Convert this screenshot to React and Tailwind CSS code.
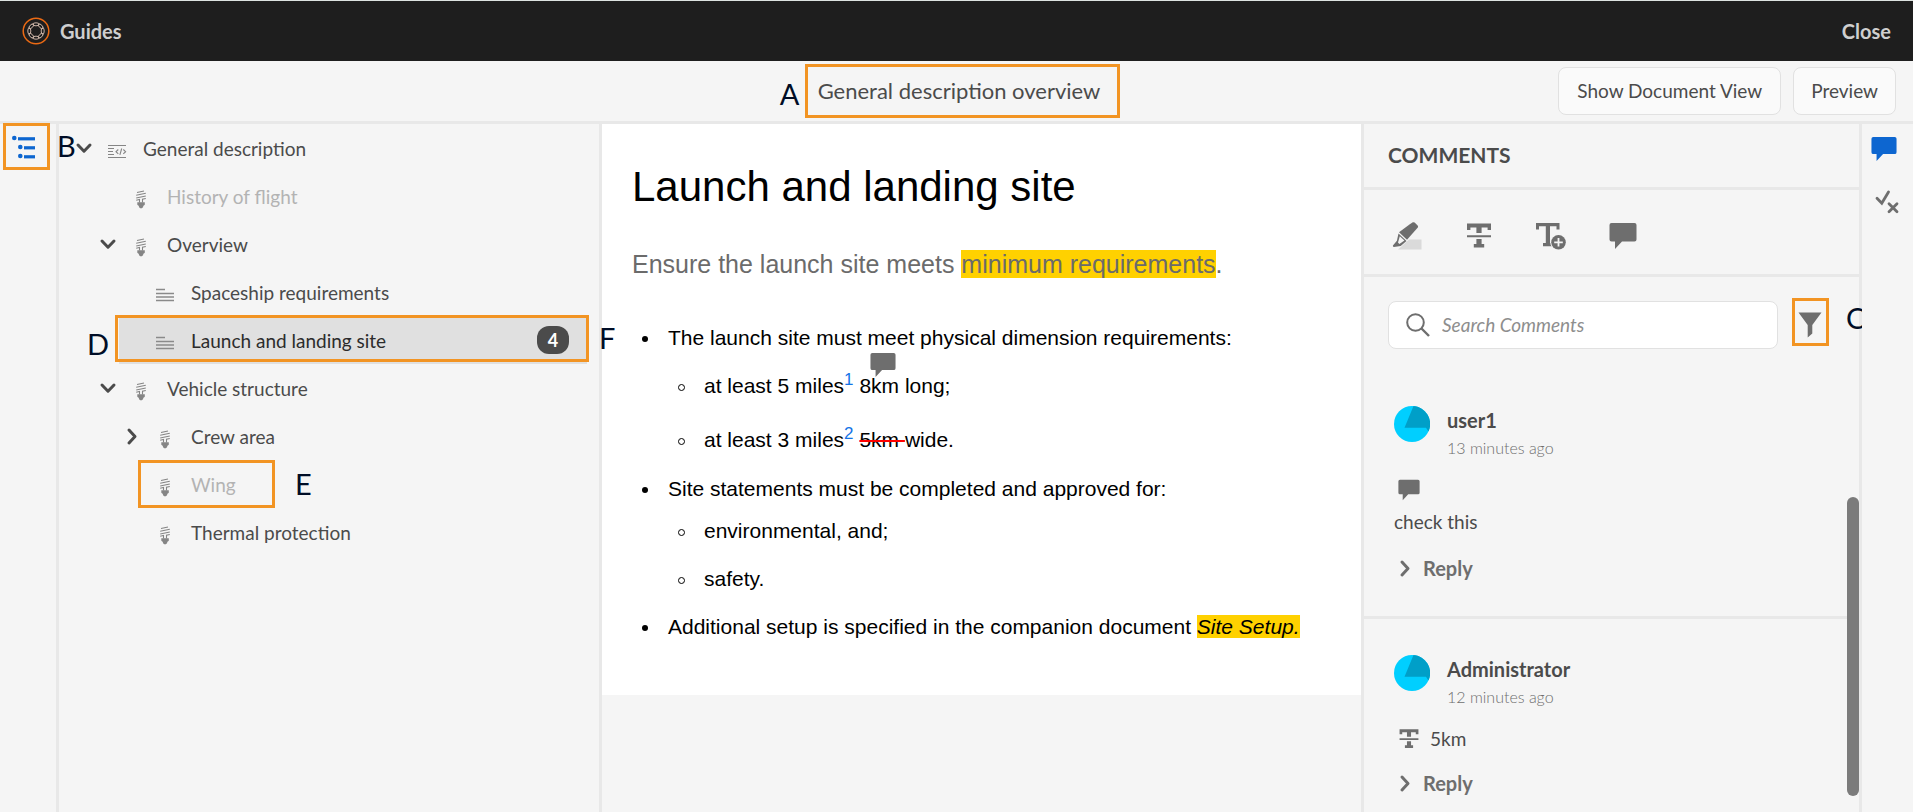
import React from "react";

function Letter({ className, children }) {
  return (
    <span
      aria-hidden="true"
      className={`pointer-events-none absolute z-10 text-[29px] leading-8 text-[#000d26] ${className}`}
    >
      {children}
    </span>
  );
}

function Outline({ className }) {
  return <span aria-hidden="true" className={`pointer-events-none absolute border-3 border-[#f29423] ${className}`} />;
}

function Logo() {
  return (
    <svg viewBox="0 0 28 28" className="size-7" fill="none">
      <circle cx="14" cy="14" r="12.8" stroke="#eb6a14" strokeWidth="1.5" />
      <g stroke="#dcc3b4" strokeWidth="0.9">
        <ellipse cx="14" cy="7.300" rx="3.200" ry="1.500" />
        <ellipse cx="14" cy="20.700" rx="3.200" ry="1.500" />
        <ellipse cx="7.300" cy="14" rx="1.500" ry="3.200" />
        <ellipse cx="20.700" cy="14" rx="1.500" ry="3.200" />
        <ellipse cx="9.300" cy="9.300" rx="3" ry="1.500" transform="rotate(-45 9.300 9.300)" />
        <ellipse cx="18.700" cy="18.700" rx="3" ry="1.500" transform="rotate(-45 18.700 18.700)" />
        <ellipse cx="18.700" cy="9.300" rx="3" ry="1.500" transform="rotate(45 18.700 9.300)" />
        <ellipse cx="9.300" cy="18.700" rx="3" ry="1.500" transform="rotate(45 9.300 18.700)" />
      </g>
    </svg>
  );
}

function OutlineIcon() {
  return (
    <svg viewBox="0 0 24 24" className="size-6" fill="#0d66d0">
      <circle cx="2.3" cy="3" r="2.3" />
      <rect x="6" y="2.2" width="17" height="3.2" />
      <circle cx="8.3" cy="12" r="2.3" />
      <rect x="12" y="11.2" width="11" height="3.2" />
      <circle cx="8.3" cy="21" r="2.3" />
      <rect x="12" y="20.2" width="11" height="3.2" />
    </svg>
  );
}

function Chevron({ right, className }) {
  return (
    <svg viewBox="0 0 22 22" className={className} fill="none" stroke="currentColor" strokeWidth="3" strokeLinecap="round" strokeLinejoin="round">
      <path d={right ? "M8 5l6 6.5-6 6.5" : "M5 8l6 6.2L17 8"} />
    </svg>
  );
}

function MapIcon() {
  return (
    <svg viewBox="0 0 20 20" className="size-5" fill="none" stroke="#858585" strokeWidth="1.2">
      <path d="M1 3.500h18M1 6.500h6M1 9.500h5M1 12.500h6M1 15.500h18" />
      <path d="M11.300 7.500l-2.300 2.200 2.300 2.200M16.300 7.500l2.300 2.200-2.300 2.200M14.700 6.500l-1.800 6.400" strokeWidth="1.100" />
    </svg>
  );
}

function BulbIcon() {
  return (
    <svg viewBox="0 0 20 20" className="size-5" fill="none" stroke="#858585" strokeWidth="1.1">
      <path d="M6 2.500l7-1.500M5.200 5.300l9.600-2M5.200 8l9.600-2M5.200 10.200l3.300-.7v3M14.800 8.500l-3.300.8v3.200" />
      <path d="M6.300 12.200h7.500v2.500l-1.600 1.200v1.200l-1.300 1.200H9.200l-1.300-1.200v-1.200l-1.600-1.200z" fill="#858585" stroke="none" />
    </svg>
  );
}

function TopicIcon() {
  return (
    <svg viewBox="0 0 20 20" className="size-5" fill="none" stroke="#8a8a8a" strokeWidth="1.3">
      <path d="M1 3.500h9M1 7.500h18M1 11h18M1 14.500h18" />
    </svg>
  );
}

function BubbleIcon({ className }) {
  return (
    <svg viewBox="0 0 28 28" className={className} fill="currentColor">
      <path d="M2.500 1h23a2 2 0 0 1 2 2v14.500a2 2 0 0 1-2 2H13L6 27v-7.500H2.500a2 2 0 0 1-2-2V3a2 2 0 0 1 2-2z" />
    </svg>
  );
}

function HighlightIcon() {
  return (
    <svg viewBox="0 0 30 28" className="h-7 w-[30px]">
      <path d="M6 27.500h23.500v-10H17z" fill="#dadada" />
      <path d="M17.800 2.300l3-2q1-.4 1.800.3l3 3q.8.900.2 1.900L15 17.800l-8-7.600z" fill="#6e6e6e" />
      <path d="M6.500 11.600l-1.600 7.200-4 4.800q-.3 1.300 1 1.400l6.800-1 5.800-5z" fill="#6e6e6e" />
      <path d="M7.800 14.300l4.600 4.300-5 3.300-1.400-1.300z" fill="#f4f4f4" />
    </svg>
  );
}

function StrikeIcon({ className }) {
  return (
    <svg viewBox="0 0 28 28" className={className} fill="currentColor">
      <path d="M2 1.500h24V8h-3.400V5.500h-6V11h-5.200V5.500h-6V8H2zM2 13.200h24v2H2zM11.400 17h5.200v5h2.600v3.500H8.800V22h2.600z" />
    </svg>
  );
}

function InsertIcon() {
  return (
    <svg viewBox="0 0 30 28" className="h-7 w-[30px]">
      <path d="M0 1h23.500v6.500h-3V4.300H14V21h2v3.300H7V21h2.800V4.300H3v3.200H0z" fill="#6e6e6e" />
      <circle cx="22.500" cy="20.300" r="8.300" fill="#f4f4f4" />
      <circle cx="22.500" cy="20.300" r="7.300" fill="#6e6e6e" />
      <path d="M22.500 16v8.600M18.200 20.300h8.600" stroke="#f4f4f4" strokeWidth="1.800" />
    </svg>
  );
}

function CheckCrossIcon() {
  return (
    <svg viewBox="0 0 24 24" className="size-6" fill="none" stroke="#6e6e6e" strokeWidth="2.800" strokeLinecap="round">
      <path d="M2 8.300l4.800 5L13.500 2M14 13.800l8 8M22 13.800l-8 8" />
    </svg>
  );
}

function Avatar() {
  return (
    <svg viewBox="0 0 36 36" className="size-9 shrink-0">
      <circle cx="18" cy="18" r="18" fill="#00cfff" />
      <path d="M19.500 0A18 18 0 0 1 34.500 25.500L32 21.800H10.500z" fill="#009fc8" />
    </svg>
  );
}

const tree = [
  {
    label: "General description",
    icon: MapIcon,
    open: true,
    children: [
      { label: "History of flight", icon: BulbIcon, muted: true },
      {
        label: "Overview",
        icon: BulbIcon,
        open: true,
        children: [
          { label: "Spaceship requirements", icon: TopicIcon },
          { label: "Launch and landing site", icon: TopicIcon, selected: true, count: 4 },
        ],
      },
      {
        label: "Vehicle structure",
        icon: BulbIcon,
        open: true,
        children: [
          { label: "Crew area", icon: BulbIcon, collapsed: true },
          { label: "Wing", icon: BulbIcon, muted: true, marked: true },
          { label: "Thermal protection", icon: BulbIcon },
        ],
      },
    ],
  },
];

function TreeItem({ node }) {
  const Icon = node.icon;
  const color = node.selected ? "text-[#2c2c2c]" : node.muted ? "text-[#b3b3b3]" : "text-[#4b4b4b]";
  return (
    <li>
      <div className={`relative flex h-12 items-center pl-0.5 ${node.selected ? "bg-[#e0e0e0]" : ""}`}>
        <span className="mr-3 flex w-[22px] shrink-0 text-[#4b4b4b]">
          {(node.open || node.collapsed) && (
            <button type="button" aria-label={`Toggle ${node.label}`}>
              <Chevron right={node.collapsed} className="size-[22px]" />
            </button>
          )}
        </span>
        <span className="mr-4 shrink-0 pt-2">
          <Icon />
        </span>
        <a href="#topic" className={`flex-1 pt-0.5 ${color}`}>
          {node.label}
        </a>
        {node.count && (
          <span className="mr-[18px] flex h-7 w-8 items-center justify-center rounded-xl bg-[#4b4b4b] text-[18px] font-bold text-white">
            {node.count}
          </span>
        )}
        {node.selected && (
          <>
            <Outline className="-top-px -right-0.5 bottom-0.5 -left-1" />
            <Letter className="top-3 -left-8">D</Letter>
          </>
        )}
        {node.marked && (
          <>
            <Outline className="top-0 bottom-0 left-[19px] w-[137px]" />
            <Letter className="top-2 left-44">E</Letter>
          </>
        )}
      </div>
      {node.children && (
        <ul className="pl-6">
          {node.children.map((c) => (
            <TreeItem key={c.label} node={c} />
          ))}
        </ul>
      )}
    </li>
  );
}

function Comment({ name, time, children }) {
  return (
    <article className="border-b-3 border-[#e8e8e8] pt-9 pb-6 pl-[30px]">
      <div className="flex gap-[17px]">
        <Avatar />
        <div>
          <h3 className="text-[20px] leading-7 font-bold text-[#4b4b4b]">{name}</h3>
          <p className="text-[16px] leading-7 font-light text-[#6e6e6e]">{time}</p>
        </div>
      </div>
      <div className="mt-4 text-[#4b4b4b]">{children}</div>
      <button type="button" className="mt-2 flex h-12 items-center gap-[7px] text-[20px] font-bold text-[#6e6e6e]">
        <Chevron right className="size-[22px]" />
        Reply
      </button>
    </article>
  );
}

function DiscItem({ className = "", children }) {
  return (
    <li className={`relative before:absolute before:top-[10px] before:-left-[26px] before:size-1.5 before:rounded-full before:bg-black ${className}`}>
      {children}
    </li>
  );
}

function RingItem({ className = "", children }) {
  return (
    <li className={`relative before:absolute before:top-[10px] before:-left-[26px] before:size-[7px] before:rounded-full before:border before:border-black ${className}`}>
      {children}
    </li>
  );
}

function Doc() {
  return (
    <main className="min-w-0 flex-1 overflow-hidden">
      <article className="bg-white px-[30px] pt-[39px] pb-14 font-['Liberation_Sans',Arial,sans-serif] text-[21px] leading-6 text-black">
        <h1 className="text-[42px] leading-[48px]">Launch and landing site</h1>
        <p className="mt-[37px] text-[25px] leading-8 text-[#6b6b6b]">
          Ensure the launch site meets <mark className="bg-[#ffd100] text-inherit">minimum requirements</mark>.
        </p>
        <ul className="mt-[46px] pl-9">
          <DiscItem>
            The launch site must meet physical dimension requirements:
            <ul className="mt-6 pl-9">
              <RingItem>
                at least 5 miles
                <a href="#note-1" className="relative -top-2 text-[17px] leading-none text-[#1473e6]">1</a>{" "}
                <span className="relative">
                  8km
                  <BubbleIcon className="absolute -top-[22px] left-[11px] size-[26px] text-[#6e6e6e]" />
                </span>{" "}
                long;
              </RingItem>
              <RingItem className="mt-[30px]">
                at least 3 miles
                <a href="#note-2" className="relative -top-2 text-[17px] leading-none text-[#1473e6]">2</a>{" "}
                <del className="decoration-[#ff0000] decoration-2">5km </del>wide.
              </RingItem>
            </ul>
          </DiscItem>
          <DiscItem className="mt-[25px]">
            Site statements must be completed and approved for:
            <ul className="mt-[18px] pl-9">
              <RingItem>environmental, and;</RingItem>
              <RingItem className="mt-6">safety.</RingItem>
            </ul>
          </DiscItem>
          <DiscItem className="mt-6">
            Additional setup is specified in the companion document{" "}
            <mark className="bg-[#ffd100] text-inherit italic">Site Setup.</mark>
          </DiscItem>
        </ul>
      </article>
    </main>
  );
}

function CommentsPanel() {
  return (
    <aside className="relative flex w-[501px] shrink-0 flex-col border-x-3 border-[#e8e8e8]">
      <h2 className="shrink-0 border-b-3 border-[#e8e8e8] pt-[15px] pb-4 pl-6 text-[21px] leading-8 font-bold text-[#4b4b4b]">
        COMMENTS
      </h2>
      <div className="flex shrink-0 gap-[43px] border-b-3 border-[#e8e8e8] pt-8 pb-6 pl-7 text-[#6e6e6e]">
        <button type="button" aria-label="Highlight"><HighlightIcon /></button>
        <button type="button" aria-label="Strikethrough"><StrikeIcon className="size-7" /></button>
        <button type="button" aria-label="Insert text"><InsertIcon /></button>
        <button type="button" aria-label="Add comment"><BubbleIcon className="size-7" /></button>
      </div>
      <div className="flex shrink-0 items-start gap-3.5 pt-6 pr-[30px] pl-6">
        <label className="flex h-12 flex-1 items-center gap-3 rounded-lg border border-[#e1e1e1] bg-white px-[17px]">
          <svg viewBox="0 0 24 24" className="size-6" fill="none" stroke="#6e6e6e" strokeWidth="2">
            <circle cx="9.500" cy="9.500" r="8.300" />
            <path d="M15.500 15.500l7.500 7.500" strokeWidth="2.400" />
          </svg>
          <input
            type="text"
            aria-label="Search Comments"
            placeholder="Search Comments"
            className="min-w-0 flex-1 outline-none placeholder:text-[#8e8e8e] placeholder:italic"
          />
        </label>
        <div className="relative -mt-[3px]">
          <button type="button" aria-label="Filter" className="flex h-12 w-[37px] items-center justify-center border-3 border-[#f29423] pr-0.5">
            <svg viewBox="0 0 24 26" className="mt-1.5 h-[26px] w-6" fill="#6e6e6e">
              <path d="M.500.500h23L14.300 13v8.500L9.700 25.500V13z" />
            </svg>
          </button>
          <Letter className="top-1 left-[54px]">C</Letter>
        </div>
      </div>
      <div className="mt-[21px] min-h-0 flex-1 overflow-hidden pr-3">
        <Comment name="user1" time="13 minutes ago">
          <span className="flex h-6 items-center pl-1">
            <BubbleIcon className="size-[22px] text-[#6e6e6e]" />
          </span>
          <p className="mt-1.5 leading-7">check this</p>
        </Comment>
        <Comment name="Administrator" time="12 minutes ago">
          <p className="flex h-6 items-center gap-2.5 pl-1">
            <StrikeIcon className="size-[22px] text-[#6e6e6e]" />
            5km
          </p>
        </Comment>
      </div>
      <span className="absolute right-0 bottom-4 h-[299px] w-3 rounded-full bg-[#7b7b7b]" />
    </aside>
  );
}

export default function App() {
  return (
    <div className="flex h-screen flex-col overflow-hidden bg-[#f5f5f5] font-[Lato,'Open_Sans',sans-serif] text-[19px] text-[#4b4b4b]">
      <header className="flex h-[61px] shrink-0 items-center justify-between border-t border-[#dde3e0] bg-[#1e1e1e] px-[22px] text-[20px] font-bold text-[#cfcfcf]">
        <div className="flex items-center gap-2.5">
          <Logo />
          <span>Guides</span>
        </div>
        <button type="button">Close</button>
      </header>

      <div className="grid shrink-0 grid-cols-[1fr_auto_1fr] items-center border-b-3 border-[#e8e8e8]">
        <span />
        <div className="relative my-[3px] ml-3">
          <Letter className="top-3.5 -left-[25px]">A</Letter>
          <h1 className="border-3 border-[#f29423] pr-[17px] pl-2.5 text-[22px] leading-[48px]">
            General description overview
          </h1>
        </div>
        <div className="flex justify-end gap-3 pr-[17px]">
          <button type="button" className="h-12 rounded-lg border border-[#e1e1e1] bg-[#fafafa] px-[18px]">
            Show Document View
          </button>
          <button type="button" className="h-12 rounded-lg border border-[#e1e1e1] bg-[#fafafa] px-[17px]">
            Preview
          </button>
        </div>
      </div>

      <div className="flex min-h-0 flex-1">
        <nav aria-label="Panels" className="relative w-[59px] shrink-0 border-r-3 border-[#e8e8e8] pt-[11px] pl-3">
          <button type="button" aria-label="Outline"><OutlineIcon /></button>
          <Outline className="-top-px left-[3px] h-[47px] w-[47px]" />
        </nav>
        <nav aria-label="Topics" className="relative w-[543px] shrink-0 border-r-3 border-[#e8e8e8] px-3">
          <Letter className="top-1.5 -left-0.5">B</Letter>
          <Letter className="top-[198px] left-[540px]">F</Letter>
          <ul>
            {tree.map((n) => (
              <TreeItem key={n.label} node={n} />
            ))}
          </ul>
        </nav>
        <Doc />
        <CommentsPanel />
        <nav
          aria-label="Review tools"
          className="relative z-20 flex w-[51px] shrink-0 flex-col items-start gap-7 bg-[#f5f5f5] pt-3 pl-[9px]"
        >
          <button type="button" aria-label="Comments"><BubbleIcon className="size-[26px] text-[#0d66d0]" /></button>
          <button type="button" aria-label="Conditions" className="pl-1"><CheckCrossIcon /></button>
        </nav>
      </div>
    </div>
  );
}
